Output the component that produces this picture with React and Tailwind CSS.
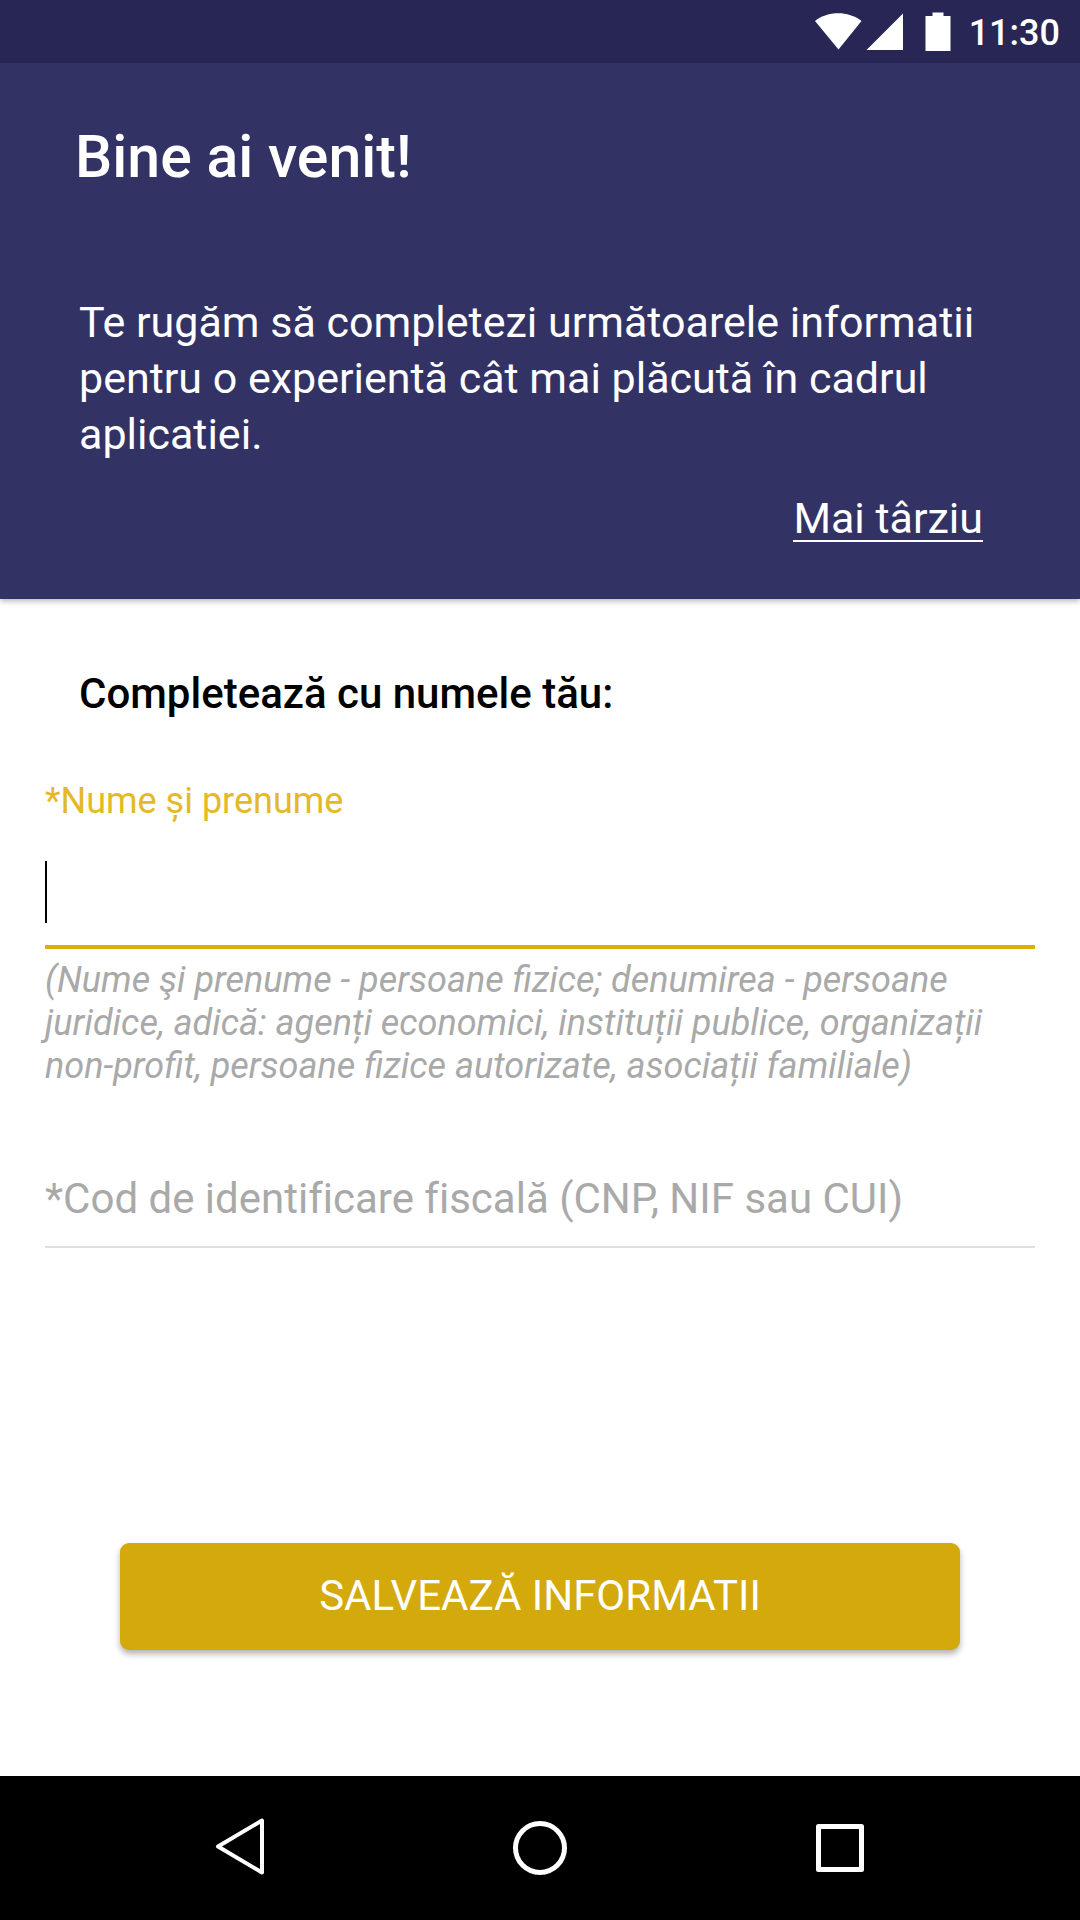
import React from "react";

function StatusBar() {
  return (
    <div className="flex h-[63px] items-center justify-end bg-[#282655] pr-5 text-white">
      <svg width="90" height="40" viewBox="0 0 90 40" fill="currentColor" aria-hidden="true">
        <path d="M1 9C14-1.200 34-1.200 47.500 9L24.500 37.500Z" />
        <path d="M89 1.5V38H52.500Z" />
      </svg>
      <svg className="ml-[21px]" width="26" height="40" viewBox="0 0 26 40" fill="currentColor" aria-hidden="true">
        <path d="M7.5 0.5H18.5V4H25.5V39H0.5V4H7.5Z" />
      </svg>
      <time className="ml-[18px] pt-0.5 text-[36px] leading-[42px] font-medium">11:30</time>
    </div>
  );
}

function Header() {
  return (
    <header className="bg-[#333264] px-[79px] pt-[58px] pb-[57px] text-white shadow-[0_2px_6px_rgba(0,0,0,0.3)]">
      <h1 className="-ml-1 text-[59px] leading-[72px] font-medium">Bine ai venit!</h1>
      <p className="mt-[101px] text-[43px] leading-[56px]">
        Te rugăm să completezi următoarele informatii pentru o experientă cât mai plăcută în cadrul aplicatiei.
      </p>
      <div className="mt-[34px] flex justify-end pr-[18px]">
        <a href="#later" className="border-b-2 border-white text-[43px] leading-[44px]">
          Mai târziu
        </a>
      </div>
    </header>
  );
}

function Form() {
  return (
    <form className="flex grow flex-col px-[45px] pt-[67px] pb-[126px]" onSubmit={(e) => e.preventDefault()}>
      <h2 className="ml-[34px] text-[42px] leading-[56px] font-medium text-black">Completează cu numele tău:</h2>
      <label htmlFor="name" className="mt-[58px] text-[36px] leading-[43px] text-[#e4b929]">
        *Nume și prenume
      </label>
      <div className="mt-[23px] flex h-[103px] items-center border-b-4 border-[#deae06] pb-[7px]">
        <span className="h-[62px] w-[2px] bg-black" aria-hidden="true" />
        <input
          id="name"
          type="text"
          aria-describedby="name-help"
          className="h-[62px] min-w-0 grow bg-transparent text-[42px] text-black outline-none"
        />
      </div>
      <p id="name-help" className="mt-[10px] text-[36px] leading-[43px] text-[#a9a9a9] italic">
        (Nume şi prenume - persoane fizice; denumirea - persoane juridice, adică: agenți economici, instituții publice,
        organizații non-profit, persoane fizice autorizate, asociații familiale)
      </p>
      <input
        type="text"
        aria-label="Cod de identificare fiscală"
        placeholder="*Cod de identificare fiscală (CNP, NIF sau CUI)"
        className="mt-[68px] h-[92px] border-b-2 border-[#dedede] bg-transparent pb-1.5 text-[42px] text-black outline-none [font-variant-ligatures:none] placeholder:text-[#a9a9a9] placeholder:opacity-100"
      />
      <button
        type="submit"
        className="mx-[75px] mt-auto h-[107px] rounded-[9px] bg-[#d4a90b] pb-0.5 text-[42px] leading-[56px] text-white shadow-[0_4px_6px_rgba(0,0,0,0.3)]"
      >
        SALVEAZĂ INFORMATII
      </button>
    </form>
  );
}

function NavigationBar() {
  return (
    <nav className="flex h-36 items-center justify-center gap-60 bg-black text-white">
      <button type="button" aria-label="Înapoi" className="size-[60px]">
        <svg viewBox="0 0 60 60" fill="none" stroke="currentColor" strokeWidth="4" strokeLinejoin="round" aria-hidden="true">
          <path d="M8 28.5L52 2.5V54.5Z" />
        </svg>
      </button>
      <button type="button" aria-label="Acasă" className="size-[60px]">
        <svg viewBox="0 0 60 60" fill="none" stroke="currentColor" strokeWidth="5" aria-hidden="true">
          <circle cx="30" cy="30" r="24.5" />
        </svg>
      </button>
      <button type="button" aria-label="Aplicații recente" className="size-[60px]">
        <svg viewBox="0 0 60 60" fill="none" stroke="currentColor" strokeWidth="5" strokeLinejoin="round" aria-hidden="true">
          <rect x="8.5" y="8.5" width="43" height="43" />
        </svg>
      </button>
    </nav>
  );
}

export default function App() {
  return (
    <div className="flex min-h-screen flex-col bg-white font-['Roboto',sans-serif]">
      <StatusBar />
      <Header />
      <Form />
      <NavigationBar />
    </div>
  );
}
